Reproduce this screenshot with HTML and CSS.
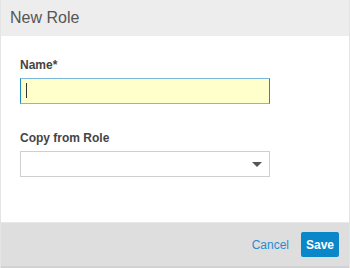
FILE: index.html
```html
<!DOCTYPE html>
<html lang="en">
<head>
    <meta charset="utf-8">
    <title>New Role</title>
    <link rel="stylesheet" href="styles.css">
</head>
<body>
    <div class="dialog">
        <div class="dialog-header">New Role</div>
        <div class="dialog-body">
            <div class="field">
                <label class="field-label" for="role-name">Name*</label>
                <div class="input-wrap">
                    <input class="text-input" id="role-name" type="text">
                    <span class="caret"></span>
                </div>
            </div>
            <div class="field">
                <label class="field-label" for="copy-role">Copy from Role</label>
                <div class="select">
                    <span class="select-value"></span>
                    <span class="select-arrow"></span>
                </div>
            </div>
        </div>
        <div class="dialog-footer">
            <a class="link-btn" href="#">Cancel</a>
            <button class="save-btn">Save</button>
        </div>
    </div>
</body>
</html>
```

FILE: styles.css
```css
* {
    padding: 0;
    margin: 0;
    box-sizing: border-box;
}

body {
    width: 350px;
    height: 268px;
    background: #ffffff;
    font-family: "Liberation Sans", Arial, sans-serif;
}

.dialog {
    display: flex;
    flex-direction: column;
    height: 268px;
    border-left: 1px solid #e4e4e4;
    border-right: 1px solid #e4e4e4;
}

.dialog-header {
    height: 36px;
    background: #ededed;
    color: #555555;
    font-size: 16px;
    padding: 9px 0 0 9px;
}

.dialog-body {
    flex: 1;
    padding: 22px 0 0 19px;
}

.field {
    margin-bottom: 27px;
}

.field-label {
    display: block;
    font-size: 12px;
    font-weight: bold;
    color: #444444;
    margin-bottom: 6px;
}

.input-wrap {
    position: relative;
    width: 250px;
}

.text-input {
    display: block;
    width: 250px;
    height: 26px;
    background: #ffffcc;
    border: 1px solid #1c8bc6;
    border-top-color: #7db9d8;
    border-bottom-color: #7db9d8;
    outline: none;
    padding: 0 6px;
    font-size: 13px;
}

.caret {
    position: absolute;
    left: 6px;
    top: 5px;
    width: 1px;
    height: 15px;
    background: #333;
}

.select {
    display: flex;
    align-items: center;
    justify-content: flex-end;
    width: 250px;
    height: 26px;
    border: 1px solid #cfcfcf;
    background: #fff;
    padding-right: 7px;
}

.select-arrow {
    width: 0;
    height: 0;
    border-left: 5px solid transparent;
    border-right: 5px solid transparent;
    border-top: 5px solid #555;
}

.dialog-footer {
    height: 46px;
    background: #dedede;
    border-top: 1px solid #e8e8e8;
    border-bottom: 2px solid #d2d2d2;
    display: flex;
    align-items: center;
    justify-content: flex-end;
    gap: 12px;
    padding-right: 10px;
}

.link-btn {
    font-size: 12px;
    color: #2a8bd0;
    text-decoration: none;
}

.save-btn {
    width: 38px;
    height: 25px;
    background: #0a87c9;
    color: #fff;
    border: none;
    border-radius: 2px;
    font-family: "Liberation Sans", Arial, sans-serif;
    font-size: 12px;
    font-weight: bold;
}
```
